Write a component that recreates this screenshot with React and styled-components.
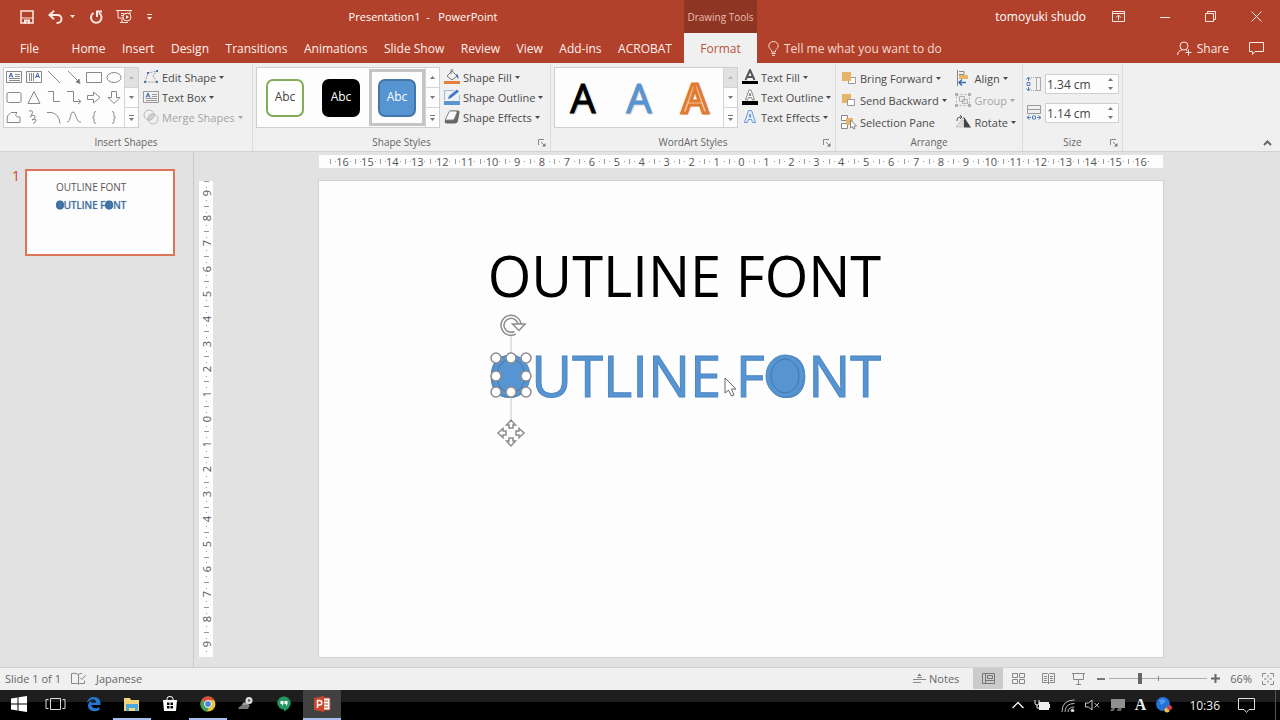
import React from 'react'
import styled, { createGlobalStyle, css } from 'styled-components'

const GlobalStyle = createGlobalStyle`
  * { box-sizing: border-box; }
  body {
    margin: 0;
    font-family: "Open Sans", "Noto Sans", sans-serif;
    font-size: 12px;
    color: #444;
    background: #000;
  }
  button, input {
    font: inherit;
    color: inherit;
    padding: 0;
    border: 0;
    background: none;
  }
  h1, h2, p { margin: 0; font-weight: 400; }
  svg { display: block; flex: none; }
`

const App = () => (
  <Window>
    <GlobalStyle />
    <TitleBar />
    <TabBar />
    <Ribbon />
    <Workspace>
      <Thumbnails />
      <Editor />
    </Workspace>
    <StatusBar />
    <Taskbar />
  </Window>
)

export default App

/* ---------- icons ---------- */

const Icon = ({ w = 16, h = 16, color = 'currentColor', children }) => (
  <svg width={w} height={h} viewBox={`0 0 ${w} ${h}`} fill="none" stroke={color} aria-hidden="true">
    {children}
  </svg>
)

const Caret = ({ up }) => (
  <Icon w={5} h={3}>
    <path d={up ? 'M0 3h5L2.500 0z' : 'M0 0h5L2.500 3z'} fill="currentColor" stroke="none" />
  </Icon>
)

const More = () => (
  <Icon w={5} h={6}>
    <path d="M0 .5h5" />
    <path d="M0 3h5L2.500 6z" fill="currentColor" stroke="none" />
  </Icon>
)

const Launcher = () => (
  <Icon w={8} h={8} color="#888">
    <path d="M.5 6V.5H6M3 3l3 3" />
    <path d="M7.500 4v3.500H4z" fill="#777" stroke="none" />
  </Icon>
)

const SaveIcon = () => (
  <Icon w={14} h={14}>
    <path d="M1 1h12v12H1z" strokeWidth="1.500" />
    <path d="M1 8h12" />
    <path d="M4 13.500V9.500h6v4H8v-2H6v2z" fill="currentColor" stroke="none" />
  </Icon>
)

const UndoIcon = () => (
  <Icon w={15} h={14}>
    <path d="M2 5h7.500a4 4 0 0 1 0 8H8.500" strokeWidth="2" />
    <path d="M6 .8 1.500 5 6 9.200" strokeWidth="2" />
  </Icon>
)

const RepeatIcon = () => (
  <Icon w={14} h={14}>
    <path d="M4.500 3A5.300 5.300 0 1 0 10 3" strokeWidth="2" />
    <path d="M8 7V1.500H13" strokeWidth="2" />
  </Icon>
)

const FromStartIcon = () => (
  <Icon w={17} h={15}>
    <path d="M0 1.500h16M2 2v7h5M5 4.500h3M5 6.500h2M6 10v3M4 13.500h8M14 2v3" />
    <circle cx="11" cy="8" r="4" />
    <path d="M10 6v4l3-2z" fill="currentColor" stroke="none" />
  </Icon>
)

const RibbonOptionsIcon = () => (
  <Icon w={13} h={11}>
    <path d="M.5.500h12v10H.500zM.5 2.500h12M6.500 9V4.500M4 6.500l2.500-2.500L9 6.500" />
  </Icon>
)

const MinimizeIcon = () => <Icon w={10} h={10}><path d="M0 5.500h10" /></Icon>
const RestoreIcon = () => (
  <Icon w={11} h={11}><path d="M.5 2.500h8v8h-8zM2.500 2.500V.500h8v8H8.500" /></Icon>
)
const CloseIcon = () => <Icon w={11} h={11}><path d="M.5.500l10 10M10.500.500l-10 10" /></Icon>

const BulbIcon = () => (
  <Icon w={11} h={15}>
    <path d="M3.500 11V9.500C2.500 8 .8 7 .8 4.800a4.700 4.300 0 0 1 9.400 0C10.200 7 8.500 8 7.500 9.500V11zM3.500 12.500h4M4 14.300h3" />
  </Icon>
)

const ShareIcon = () => (
  <Icon w={15} h={15}>
    <circle cx="7" cy="5" r="4" />
    <path d="M.5 14c.3-3 2-4.500 4.500-5M9 9l1.500 1M11.500 8.500v6M8.500 11.500h6" />
  </Icon>
)

const CommentIcon = () => (
  <Icon w={15} h={13}><path d="M.5.500h14v9H6l-2.500 3v-3h-3z" /></Icon>
)

const EditShapeIcon = () => (
  <Icon color="#999">
    <path d="M2 13 5 4l9-2-4 5 4 6z" strokeDasharray="2 1" />
    <path d="M1 12h2v2H1zM4 3h2v2H4zM13 1h2v2h-2zM13 12h2v2h-2z" fill="#4a72b0" stroke="none" />
  </Icon>
)

const TextBoxIcon = () => (
  <Icon color="#999">
    <path d="M.5 2.500h15v11H.500zM9 5.500h5M9 7.500h5M3 9.500h11M3 11.500h11" />
    <path d="M3 8.500l2-4.500 2 4.500M4 7h2" stroke="#3c66a8" />
  </Icon>
)

const MergeIcon = () => (
  <Icon color="#bbb">
    <circle cx="6" cy="6" r="5" />
    <circle cx="10" cy="10" r="5" />
    <path d="M5 10a5 5 0 0 1 6-5 5 5 0 0 1-6 6z" fill="#d2d2d2" />
  </Icon>
)

const FillIcon = () => (
  <Icon color="#777">
    <path d="M3 7 8 2l5 5-5 4zM7 5V1.500a1 1 0 0 1 2 0" />
    <path d="M12 5c2 0 2.500 2 2.500 5-1.500-1-2-2.500-2-4z" fill="#3d6cb0" stroke="none" />
    <path d="M0 12h16v3H0z" fill="#e0803a" stroke="none" />
  </Icon>
)

const OutlineIcon = () => (
  <Icon color="#9dbbe0">
    <path d="M10 1.500H.5v9.500M15.500 6v5" />
    <path d="M4 10l1-3 8-6.500 2 2-8 6.500z" fill="#3f78bf" stroke="none" />
    <path d="M0 12h16v4H0z" fill="#5b93cf" stroke="none" />
  </Icon>
)

const EffectsIcon = () => (
  <Icon color="#888">
    <path d="M1 11 5 3q.5-1.500 2-1.500h7q1.800 0 1.500 2l-1.500 8q-.5 3-3 3H3q-3 0-2-3.500z" fill="#666" stroke="none" />
    <path d="M1.500 10 5 3Q5.500 2 6.500 2h5.500q1.500 0 1 1.500L10.500 9.500q-.4 1.500-2 1.500H2.500q-1.400 0-1-1z" fill="#fafafa" />
  </Icon>
)

const TextFillIcon = () => (
  <Icon color="#555">
    <path d="M3.500 11 8 1l4.500 10M5 8h6" strokeWidth="2" />
    <path d="M0 12h16v3H0z" fill="#000" stroke="none" />
  </Icon>
)

const TextOutlineIcon = () => (
  <Icon color="#888">
    <path d="M3.500 11h2L6.500 8.500h3l1 2.500h2L9 1H7zM7 6.500 8 4l1 2.500z" fill="#fff" />
    <path d="M0 12h16v4H0z" fill="#000" stroke="none" />
  </Icon>
)

const TextEffectsIcon = () => (
  <Icon color="#6d98d2">
    <path d="M2.500 13.500h3l1-3h3l1 3h3L9.500 1.500h-3zM7.200 8 8 5l.8 3z" fill="#e4eefa" />
  </Icon>
)

const ForwardIcon = () => (
  <Icon color="#999">
    <path d="M7.500 7.500h7v6h-7z" fill="#fff" />
    <path d="M1 2h9v9H1z" fill="#e6b566" stroke="none" />
  </Icon>
)

const BackwardIcon = () => (
  <Icon color="#999">
    <path d="M1 2h9v9H1z" fill="#e6b566" stroke="none" />
    <path d="M6.500 7.500h7v6h-7z" fill="#fff" />
  </Icon>
)

const SelectionIcon = () => (
  <Icon color="#888">
    <path d="M.5 1.500h6v5h-6zM.5 9.500h6v5h-6z" fill="#fff" />
    <path d="M5 4h7v7H5z" fill="#e6b566" stroke="none" />
    <path d="M9.500 6v8l2-1.500 1 2.500 1.500-.6-1-2.400h2.500z" fill="#fff" />
  </Icon>
)

const AlignIcon = () => (
  <Icon color="#888">
    <path d="M2.500 0v16M4 1.500h5v3H4" />
    <path d="M4 5h9v4H4z" fill="#e6b566" stroke="none" />
    <path d="M4 12.500h7M7 9.500l-3 3 3 3" stroke="#3d6cb0" strokeWidth="1.500" />
  </Icon>
)

const GroupIcon = () => (
  <Icon color="#b0b0b0">
    <path d="M1.500 2.500h13v11h-13z" strokeDasharray="2 2" />
    <path d="M4.500 4.500h5v5h-5zM7.500 7.500h5v4h-5z" />
    <path d="M0 1h3v3H0zM13 1h3v3h-3zM0 12h3v3H0zM13 12h3v3h-3z" fill="#b0b0b0" stroke="none" />
  </Icon>
)

const RotateIcon = () => (
  <Icon color="#666">
    <path d="M8.500 3v10H1z" fill="#ddd" stroke="#bbb" strokeDasharray="2 1" />
    <path d="M9 3v10.500h7z" fill="#444" stroke="none" />
    <path d="M2 7c0-3 1-4 4-4M5 1l2 2-2 2" stroke="#555" />
  </Icon>
)

const HeightIcon = () => (
  <Icon color="#aaa">
    <path d="M10.500 1.500h4v13h-4z" />
    <path d="M5 1.500h5M5 14.500h5" strokeDasharray="1 1" />
    <path d="M2.500 1v4M2.500 11v4M1 6.500h3v3H1zM.5 3.500l2-2.500 2 2.500M.5 12.500l2 2.500 2-2.500" stroke="#5a80b8" />
  </Icon>
)

const WidthIcon = () => (
  <Icon color="#999">
    <path d="M1.500.500h13v8h-13zM1.500 4.500h13" />
    <path d="M1 12.500h4M11 12.500h4M6.500 11h3v3h-3zM3.500 10.500l-2.500 2 2.500 2M12.500 10.500l2.500 2-2.500 2" stroke="#5a80b8" />
  </Icon>
)

const SHAPES = [
  ['text box', <><path d="M.5 1.500h15v11H.500zM9 4.500h5M9 6.500h5M3 8.500h11M3 10.500h11" /><path d="M3 7.500 5 3l2 4.500M4 6h2" stroke="#3c66a8" /></>],
  ['vertical text box', <><path d="M.5 1.500h15v11H.500zM3.500 3v8M5.500 3v8M7.500 3v8" /><path d="M9.500 8l2-5 2 5M10 6.500h3" stroke="#3c66a8" /></>],
  ['line', <path d="M2 1l12 12" />],
  ['arrow', <><path d="M2 1l11 11" /><path d="M14 13.500 10 12l3-3z" fill="#777" /></>],
  ['rectangle', <path d="M.5 2.500h15v10H.500z" />],
  ['oval', <ellipse cx="8" cy="7.500" rx="7" ry="5" />],
  ['rounded rectangle', <rect x="1" y="2.500" width="14" height="10" rx="1.500" />],
  ['triangle', <path d="M8 1.500 14 13.500H2z" />],
  ['elbow', <path d="M2 1.500h5.500v10H14" />],
  ['elbow arrow', <><path d="M1 1.500h6.500v10H14" /><path d="M12 9l3 2.500-3 2.500" /></>],
  ['right arrow', <path d="M1.500 5.500h6v-3.500l6.500 5.500L7.500 13V9.500h-6z" />],
  ['down arrow', <path d="M5.500 1.500h5v6H14L8 13.500 2 7.500h3.500z" />],
  ['freeform', <path d="M1.500 6 5 2.500h6q-3 3.500 1 4.500h2v5.500h-13z" />],
  ['scribble', <path d="M3 1q5-1 3 3t-2 3q4-3 5-1t-3 4q4-2 4 0t-3 3.500" />],
  ['curve', <path d="M1 2.500h4q8 1 9 11" />],
  ['wave', <path d="M1 12c4 0 3-10 6-10s3 11 8 10" />],
  ['left brace', <path d="M10 1.500Q8 1.500 8 3.500V6Q8 7.500 6.500 7.500 8 7.500 8 9v2.500q0 2 2 2" />],
  ['right brace', <path d="M6 1.500q2 0 2 2V6q0 1.500 1.500 1.500Q8 7.500 8 9v2.500q0 2-2 2" />],
]

/* ---------- title and tabs ---------- */

const TitleBar = () => (
  <TitleRow>
    <TitleLeft>
      <QuickAccess>
        <BarButton aria-label="Save"><SaveIcon /></BarButton>
        <SplitButton>
          <BarButton aria-label="Undo"><UndoIcon /></BarButton>
          <BarButton aria-label="Undo history"><Caret /></BarButton>
        </SplitButton>
        <BarButton aria-label="Repeat"><RepeatIcon /></BarButton>
        <BarButton aria-label="Start from beginning"><FromStartIcon /></BarButton>
        <BarButton aria-label="Customize"><More /></BarButton>
      </QuickAccess>
      <DocTitle>Presentation1&nbsp; -&nbsp;&nbsp; PowerPoint</DocTitle>
    </TitleLeft>
    <ToolsLabel>Drawing Tools</ToolsLabel>
    <WindowControls>
      <span>tomoyuki shudo</span>
      <ControlButtons>
        <BarButton aria-label="Ribbon display options"><RibbonOptionsIcon /></BarButton>
        <BarButton aria-label="Minimize"><MinimizeIcon /></BarButton>
        <BarButton aria-label="Restore"><RestoreIcon /></BarButton>
        <BarButton aria-label="Close"><CloseIcon /></BarButton>
      </ControlButtons>
    </WindowControls>
  </TitleRow>
)

const TABS = ['Home', 'Insert', 'Design', 'Transitions', 'Animations', 'Slide Show', 'Review', 'View', 'Add-ins', 'ACROBAT']

const TabBar = () => (
  <TabRow>
    <Tabs>
      <FileTab>File</FileTab>
      {TABS.map(t => <Tab key={t}>{t}</Tab>)}
    </Tabs>
    <ActiveTab>Format</ActiveTab>
    <TabsRight>
      <TellMe><BulbIcon />Tell me what you want to do</TellMe>
      <Share><ShareIcon />Share</Share>
      <BarButton aria-label="Comments"><CommentIcon /></BarButton>
    </TabsRight>
  </TabRow>
)

/* ---------- ribbon ---------- */

const GalleryScroll = ({ top }) => (
  <Scroller>
    <ScrollButton aria-label="Previous row" $off={top}><Caret up /></ScrollButton>
    <ScrollButton aria-label="Next row"><Caret /></ScrollButton>
    <ScrollButton aria-label="More"><More /></ScrollButton>
  </Scroller>
)

const Cmd = ({ icon, label, menu = true, off }) => (
  <Command $off={off}>
    {icon}
    <span>{label}</span>
    {menu && <Caret />}
  </Command>
)

const Ribbon = () => (
  <RibbonBar>
    <Group $width={253}>
      <GroupBody>
        <Gallery>
          <ShapeGrid>
            {SHAPES.map(([name, art]) => (
              <ShapeButton key={name} aria-label={name}>
                <Icon h={15} color="#888">{art}</Icon>
              </ShapeButton>
            ))}
          </ShapeGrid>
          <GalleryScroll top />
        </Gallery>
        <Commands>
          <Cmd icon={<EditShapeIcon />} label="Edit Shape" />
          <Cmd icon={<TextBoxIcon />} label="Text Box" />
          <Cmd icon={<MergeIcon />} label="Merge Shapes" off />
        </Commands>
      </GroupBody>
      <GroupLabel>Insert Shapes</GroupLabel>
    </Group>

    <Group $width={298}>
      <GroupBody>
        <Gallery>
          <StyleCell><StyleTile $bg="#fff" $line="#82ad58" $color="#444">Abc</StyleTile></StyleCell>
          <StyleCell><StyleTile $bg="#000" $line="#000" $color="#fff">Abc</StyleTile></StyleCell>
          <StyleCell $on><StyleTile $bg="#5794d2" $line="#4276ab" $color="#fff">Abc</StyleTile></StyleCell>
          <GalleryScroll />
        </Gallery>
        <Commands>
          <Cmd icon={<FillIcon />} label="Shape Fill" />
          <Cmd icon={<OutlineIcon />} label="Shape Outline" />
          <Cmd icon={<EffectsIcon />} label="Shape Effects" />
        </Commands>
      </GroupBody>
      <GroupLabel>Shape Styles</GroupLabel>
      <LaunchButton aria-label="Format Shape"><Launcher /></LaunchButton>
    </Group>

    <Group $width={285}>
      <GroupBody>
        <Gallery>
          <ArtCell $color="#000">A</ArtCell>
          <ArtCell $color="#5794d2">A</ArtCell>
          <ArtCell $color="#f9c9a6" $stroke="#e07a30">A</ArtCell>
          <GalleryScroll top />
        </Gallery>
        <Commands>
          <Cmd icon={<TextFillIcon />} label="Text Fill" />
          <Cmd icon={<TextOutlineIcon />} label="Text Outline" />
          <Cmd icon={<TextEffectsIcon />} label="Text Effects" />
        </Commands>
      </GroupBody>
      <GroupLabel>WordArt Styles</GroupLabel>
      <LaunchButton aria-label="Format Text Effects"><Launcher /></LaunchButton>
    </Group>

    <Group $width={187}>
      <ArrangeBody>
        <Commands $tall>
          <Cmd icon={<ForwardIcon />} label="Bring Forward" />
          <Cmd icon={<BackwardIcon />} label="Send Backward" />
          <Cmd icon={<SelectionIcon />} label="Selection Pane" menu={false} />
        </Commands>
        <Commands $tall>
          <Cmd icon={<AlignIcon />} label="Align" />
          <Cmd icon={<GroupIcon />} label="Group" off />
          <Cmd icon={<RotateIcon />} label="Rotate" />
        </Commands>
      </ArrangeBody>
      <GroupLabel>Arrange</GroupLabel>
    </Group>

    <Group $width={100}>
      <SizeFields>
        <SizeField>
          <HeightIcon />
          <Spin><input aria-label="Shape height" defaultValue="1.34 cm" /><SpinArrows><Caret up /><Caret /></SpinArrows></Spin>
        </SizeField>
        <SizeField>
          <WidthIcon />
          <Spin><input aria-label="Shape width" defaultValue="1.14 cm" /><SpinArrows><Caret up /><Caret /></SpinArrows></Spin>
        </SizeField>
      </SizeFields>
      <GroupLabel>Size</GroupLabel>
      <LaunchButton aria-label="Size and position"><Launcher /></LaunchButton>
    </Group>

    <Collapse aria-label="Collapse the ribbon">
      <Icon w={9} h={6} color="#666"><path d="M1 5l3.500-3.500L8 5" strokeWidth="2" /></Icon>
    </Collapse>
  </RibbonBar>
)

/* ---------- slide area ---------- */

const Thumbnails = () => (
  <ThumbPane>
    <ThumbNumber>1</ThumbNumber>
    <Thumb aria-label="Slide 1">
      <ThumbLine>OUTLINE FONT</ThumbLine>
      <ThumbLine $blue><Dot>O</Dot>UTLINE F<Dot>O</Dot>NT</ThumbLine>
    </Thumb>
  </ThumbPane>
)

const range = n => Array.from({ length: n * 2 + 1 }, (_, i) => Math.abs(i - n))

const Editor = () => (
  <EditorGrid>
    <HRuler>{range(16).map((n, i) => <HCell key={i}>{n}</HCell>)}</HRuler>
    <VRuler>{range(9).map((n, i) => <VCell key={i}><span>{n}</span></VCell>)}</VRuler>
    <Slide>
      <SlideText>OUTLINE FONT</SlideText>
      <SlideText $blue>OUTLINE FONT</SlideText>
      <SelectionLayer />
    </Slide>
  </EditorGrid>
)

const HANDLES = [[177, 177], [192, 177], [207, 177], [177, 195], [207, 195], [177, 211], [192, 211], [207, 211]]
const ARROW = 'M-2-5v-3h-2.500L0-13l4.500 5H2v3z'

const SelectionLayer = () => (
  <Overlay viewBox="0 0 844 476" fill="none" aria-hidden="true">
    {[192, 466].map(x => (
      <g key={x} fill="#5794d2" stroke="#4276ab">
        <ellipse cx={x} cy="195" rx="19" ry="21" stroke="#4f87c0" />
        <ellipse cx={x} cy="195" rx="14" ry="17" />
      </g>
    ))}
    <path d="M192 154v85" stroke="#c8c8c8" />
    <ellipse cx="192" cy="195" rx="18" ry="20" fill="#5794d2" />
    <ellipse cx="192" cy="195" rx="14" ry="17" stroke="#4276ab" />
    <g stroke="#8c8c8c" strokeWidth="1.500">
      {HANDLES.map(([x, y]) => <circle key={x + '-' + y} cx={x} cy={y} r="5" fill="#fff" />)}
      <g transform="translate(192 144)">
        <path d="M8.500 0A8.500 8.500 0 1 0 4 7.800" strokeWidth="4.500" />
        <path d="M8.500 0A8.500 8.500 0 1 0 4 7.800" stroke="#fff" strokeWidth="1.500" />
        <path d="M1.500-1h12.500L8 5.500z" fill="#fff" />
      </g>
      <g transform="translate(192 252)">
        {[0, 90, 180, 270].map(a => <path key={a} d={ARROW} transform={`rotate(${a})`} fill="#fff" />)}
      </g>
    </g>
    <path d="M406 197v15l3.500-3 3 6 2.500-1-2.500-6h4.500z" fill="#fff" stroke="#666" />
  </Overlay>
)

/* ---------- status bar ---------- */

const StatusBar = () => (
  <Status>
    <span>Slide 1 of 1</span>
    <StatusButton aria-label="Spelling">
      <Icon w={15} h={13} color="#888"><path d="M7.500 2.500v10M7.500 2.500Q4 .5.500 1.500v10h6l1 1 1-1h5v-3M7.500 2.500 9 1.500h2M9 5.500l2 2 3.500-4.500" /></Icon>
    </StatusButton>
    <StatusButton>Japanese</StatusButton>
    <Spacer />
    <NotesButton>
      <Icon w={13} h={12} color="#888"><path d="M0 6.500h13M0 9.500h8M4 4.500h5" /><path d="M4.500 3 6.500.500l2 2.500z" fill="#777" stroke="none" /></Icon>
      Notes
    </NotesButton>
    <Views>
      <ViewButton aria-label="Normal" $on>
        <Icon w={13} h={11} color="#777"><path d="M.5.500h12v10H.500zM3.500.500v10M3.500 7.500h9M5.500 2.500h5v3h-5z" /></Icon>
      </ViewButton>
      <ViewButton aria-label="Slide sorter">
        <Icon w={13} h={11} color="#888"><path d="M.5.500h5v4h-5zM7.500.500h5v4h-5zM.5 6.500h5v4h-5zM7.500 6.500h5v4h-5z" /></Icon>
      </ViewButton>
      <ViewButton aria-label="Reading view">
        <Icon w={13} h={11} color="#888"><path d="M6.500 1v10M.5.500h5l1 1 1-1h5v9h-5l-1 1-1-1h-5zM2 3.500h3M2 5.500h3M2 7.500h3M8 3.500h3M8 5.500h3M8 7.500h3" /></Icon>
      </ViewButton>
      <ViewButton aria-label="Slide show">
        <Icon w={13} h={12} color="#888"><path d="M0 .5h13M1.500 1v5.500h10V1M6.500 7v4M4 11.500h5" /></Icon>
      </ViewButton>
      <Zoom>
        <StatusButton aria-label="Zoom out"><Icon w={8} h={10} color="#777"><path d="M0 5h8" strokeWidth="2" /></Icon></StatusButton>
        <ZoomRange type="range" aria-label="Zoom" min="0" max="100" defaultValue="30" />
        <StatusButton aria-label="Zoom in"><Icon w={9} h={9} color="#666"><path d="M0 4.500h9M4.500 0v9" strokeWidth="2" /></Icon></StatusButton>
      </Zoom>
    </Views>
    <StatusButton>66%</StatusButton>
    <StatusButton aria-label="Fit slide to window">
      <Icon w={12} h={12} color="#888"><path d="M.5 4V.500H4M8 .5h3.500V4M11.500 8v3.500H8M4 11.500H.500V8M6 2v2.500M6 7.500V10M2 6h2.500M7.500 6H10" /></Icon>
    </StatusButton>
  </Status>
)

/* ---------- windows taskbar ---------- */

const APPS = [
  ['Start', <path d="M0 2.500 6.500 1.500V7.500H0zM7.500 1.300 16 0v7.500H7.500zM0 8.500h6.500v6L0 13.500zM7.500 8.500H16V16l-8.500-1.300z" fill="#fff" />],
  ['Task view', <path d="M2.500 2.500h10v11h-10zM.5 3.500h-2.500v9H.5M14.500 3.500H17v9h-2.500" stroke="#ddd" />],
  ['Edge', <path d="M1 7C2 2 5 1 8 1c4.500 0 7 3 6.500 8H5.500c.5 4 5.500 4 8 2v3C8 16.500 2 15 2 9.500 2 7 4 5 6 4.500 5.300 5 5 6 5 6.500h5C10 4 8.500 3.500 7 3.500 4 3.500 2 5.500 1 7z" fill="#2477cf" />],
  ['File Explorer', <><path d="M0 2h6l1 2h8v11H0z" fill="#f3d57b" /><path d="M2 8h12v7h-3v-3H5v3H2z" fill="#4fa8dc" /></>, 'on'],
  ['Store', <><path d="M1 4h14l-1 11H2z" fill="#fff" /><path d="M5 5V2.500q0-2 3-2t3 2V5" stroke="#fff" /><path d="M5 6.500h2.500V9H5zM8.500 6.500H11V9H8.500zM5 10h2.500v2.500H5zM8.500 10H11v2.500H8.500z" fill="#000" /></>],
  ['Chrome', <><circle cx="8" cy="8" r="7.500" fill="#e8c53a" /><path d="M8 8 1.500 4.200A7.500 7.500 0 0 1 14.500 4.200H8z" fill="#d94f3d" /><path d="M8 8 1.500 4.200A7.500 7.500 0 0 0 7 15.500L10 9z" fill="#3f9e57" /><circle cx="8" cy="8" r="3.500" fill="#4a83dd" stroke="#fff" /></>, 'on'],
  ['Scanner', <><path d="M0 12 4 9h8l-2 4H1z" fill="#777" /><path d="M4 9q0-3 5-3l2 3z" fill="#999" /><circle cx="11" cy="4.500" r="3.500" fill="#ddd" /><circle cx="11" cy="4.500" r="1.200" fill="#555" /></>],
  ['Hangouts', <><path d="M8 .5a6.700 6.500 0 0 1 6.700 6.500c0 4-3.700 7-6.700 8.500v-2.500A6.500 6.300 0 0 1 8 .5z" fill="#239a62" /><path d="M8 .5a6.700 6.500 0 0 0 0 13z" fill="#239a62" /><path d="M4.500 5h3v3l-1.500 2V8H4.500zM8.500 5h3v3L10 10V8H8.500z" fill="#fff" /></>],
  ['PowerPoint', <><path d="M8 2h8v12H8z" fill="#fff" stroke="#c9452c" /><path d="M10 5h4M10 8h4M10 11h4" stroke="#c9452c" /><path d="M0 2 10 0v16L0 14z" fill="#c9452c" /><path d="M3.500 12V4.500h2a2 2 0 0 1 0 4.500h-2" stroke="#fff" strokeWidth="1.500" /></>, 'active'],
]

const Taskbar = () => (
  <TaskRow>
    {APPS.map(([name, art, state]) => (
      <TaskButton key={name} aria-label={name} $state={state}>
        <Icon color="none">{art}</Icon>
      </TaskButton>
    ))}
    <Tray>
      <Icon w={12} h={8}><path d="M.5 7 6 1.500 11.500 7" strokeWidth="1.500" /></Icon>
      <Icon w={17} h={12}><path d="M1 1v3q0 2 2 2t2-2V1M3 6v3h3" /><path d="M5 3h10v2h1v4h-1v2H5z" fill="#eee" stroke="none" /></Icon>
      <Icon w={14} h={13} color="#bbb"><path d="M1 13Q1 1 13.500 1M4 13Q4 4.500 13.500 4.500M7 13Q7 8 13.500 8" /><circle cx="11.500" cy="11.500" r="1.500" fill="#ddd" /></Icon>
      <Icon w={15} h={12} color="#ccc"><path d="M.5 4h3L7 1v10L3.500 8h-3zM9.500 4l4.500 4.500M14 4 9.500 8.500" /></Icon>
      <Icon w={15} h={14} color="none"><path d="M1 1h14v9H1z" fill="#8f8f8f" /><path d="M2 10h3l-1 3H0zM8 10h4l-1 3H7z" fill="#666" /></Icon>
      <ImeMode>A</ImeMode>
      <Icon color="none"><circle cx="7" cy="7" r="7" fill="#2472d8" /><path d="M3 3q4-2 6 0t-4 5z" fill="#4a98ee" /><circle cx="11" cy="13" r="2.500" fill="#f0c04a" /><circle cx="13.500" cy="10.500" r="2.500" fill="#d2414a" /></Icon>
      <Clock>10:36</Clock>
      <Icon w={17} h={17} color="#ddd"><path d="M.5 1.500h16v11H11L8.500 15.500 6 12.500H.500z" /></Icon>
    </Tray>
  </TaskRow>
)

/* ---------- styles ---------- */

const Window = styled.div`
  display: flex;
  flex-direction: column;
  min-height: 100vh;
`

const headerRow = css`
  display: grid;
  grid-template-columns: 684px 73px 1fr;
  background: #b1412a;
  color: #fff;
`

const TitleRow = styled.header`
  ${headerRow}
  height: 33px;
`

const TitleLeft = styled.div`
  display: flex;
  align-items: center;
`

const QuickAccess = styled.div`
  display: flex;
  align-items: center;
  justify-content: space-between;
  width: 152px;
  padding-left: 20px;
`

const SplitButton = styled.div`
  display: flex;
  gap: 7px;
`

const BarButton = styled.button`
  display: flex;
  align-items: center;
  color: #fbe9e4;
`

const DocTitle = styled.h1`
  flex: 1;
  padding-left: 10px;
  text-align: center;
  font-size: 11px;
`

const ToolsLabel = styled.div`
  display: flex;
  align-items: center;
  justify-content: center;
  background: #8f3524;
  color: #eebcb0;
  font-size: 10px;
`

const WindowControls = styled.div`
  display: flex;
  align-items: center;
  justify-content: flex-end;
  gap: 26px;
  padding-right: 18px;
`

const ControlButtons = styled.div`
  display: flex;
  align-items: center;
  justify-content: space-between;
  width: 150px;
`

const TabRow = styled.nav`
  ${headerRow}
  height: 30px;
`

const Tabs = styled.div`
  display: flex;
  justify-content: space-between;
  padding: 0 12px 0 20px;
`

const Tab = styled.button`
  color: #fdf1ee;
  white-space: nowrap;
`

const FileTab = styled(Tab)`
  margin-right: 16px;
`

const ActiveTab = styled(Tab)`
  background: #f0f0f0;
  color: #b9523d;
`

const TabsRight = styled.div`
  display: flex;
  align-items: center;
  gap: 20px;
  padding: 0 16px 0 11px;
`

const TellMe = styled.button`
  display: flex;
  align-items: center;
  gap: 5px;
  margin-right: auto;
  color: #f7d9d1;
`

const Share = styled(BarButton)`
  gap: 5px;
`

const RibbonBar = styled.section`
  display: flex;
  height: 89px;
  background: #f0f0f0;
  border-bottom: 1px solid #d2d2d2;
`

const Group = styled.div`
  position: relative;
  display: flex;
  flex-direction: column;
  justify-content: space-between;
  flex: none;
  width: ${p => p.$width}px;
  padding: 4px 3px 0;
  border-right: 1px solid #dcdcdc;
`

const GroupBody = styled.div`
  display: flex;
  gap: 4px;
`

const ArrangeBody = styled(GroupBody)`
  justify-content: space-between;
  padding: 0 3px 0 2px;
`

const GroupLabel = styled.div`
  height: 17px;
  line-height: 17px;
  font-size: 10px;
  text-align: center;
  color: #666;
`

const LaunchButton = styled.button`
  position: absolute;
  right: 4px;
  bottom: 4px;
`

const Gallery = styled.div`
  display: flex;
  height: 61px;
  background: #fdfdfd;
  border: 1px solid #cfcfcf;
`

const ShapeGrid = styled.div`
  display: grid;
  grid-template-columns: repeat(6, 20px);
`

const ShapeButton = styled.button`
  display: flex;
  align-items: center;
  justify-content: center;
`

const Scroller = styled.div`
  display: flex;
  flex-direction: column;
  width: 14px;
  border-left: 1px solid #d4d4d4;
`

const ScrollButton = styled.button`
  flex: 1;
  display: flex;
  align-items: center;
  justify-content: center;
  color: #777;
  & + & { border-top: 1px solid #d4d4d4; }
  ${p => p.$off && 'background: #e1e1e1; color: #b5b5b5;'}
`

const Commands = styled.div`
  display: flex;
  flex-direction: column;
  flex: none;
  button { height: ${p => (p.$tall ? 22 : 20)}px; }
`

const Command = styled.button`
  display: flex;
  align-items: center;
  gap: 3px;
  white-space: nowrap;
  font-size: 11px;
  color: ${p => (p.$off ? '#a5a5a5' : '#4a4a4a')};
`

const StyleCell = styled.button`
  display: flex;
  align-items: center;
  justify-content: center;
  width: 56px;
  border: 3px solid ${p => (p.$on ? '#c4c4c4' : 'transparent')};
  margin: 1px 0;
`

const StyleTile = styled.span`
  width: 38px;
  height: 38px;
  line-height: 32px;
  text-align: center;
  border: 2px solid ${p => p.$line};
  border-radius: 7px;
  background: ${p => p.$bg};
  color: ${p => p.$color};
`

const ArtCell = styled.button`
  width: 56px;
  font-size: 40px;
  line-height: 56px;
  color: ${p => p.$color};
  text-shadow: 1px 1px 2px #aaa;
  -webkit-text-stroke: 1px ${p => p.$color};
  ${p => p.$stroke && `
    font-weight: 600;
    -webkit-text-stroke: 3px ${p.$stroke};
  `}
`

const SizeFields = styled.div`
  display: flex;
  flex-direction: column;
  gap: 9px;
  padding-top: 7px;
`

const SizeField = styled.div`
  display: flex;
  align-items: center;
  gap: 3px;
`

const Spin = styled.div`
  display: flex;
  align-items: center;
  flex: 1;
  min-width: 0;
  height: 20px;
  padding: 0 5px 0 1px;
  background: #fdfdfd;
  border: 1px solid #cfcfcf;
  input { flex: 1; min-width: 0; }
`

const SpinArrows = styled.span`
  display: grid;
  gap: 6px;
  color: #777;
`

const Collapse = styled.button`
  align-self: flex-end;
  margin: 0 8px 5px auto;
`

const Workspace = styled.main`
  flex: 1;
  display: flex;
  background: #e2e2e2;
`

const ThumbPane = styled.aside`
  display: flex;
  align-items: flex-start;
  gap: 5px;
  width: 194px;
  padding: 17px 18px 0 12px;
  border-right: 1px solid #c9c9c9;
`

const ThumbNumber = styled.span`
  line-height: 14px;
  font-size: 14px;
  color: #d04a2e;
`

const Thumb = styled.button`
  flex: 1;
  display: flex;
  flex-direction: column;
  align-items: flex-start;
  aspect-ratio: 149 / 86;
  padding: 7px 0 0 29px;
  background: #fdfdfd;
  border: 2px solid #dd7359;
`

const ThumbLine = styled.span`
  height: 18px;
  line-height: 18px;
  font-size: 10px;
  white-space: nowrap;
  color: ${p => (p.$blue ? '#3f6b9c' : '#555')};
  ${p => p.$blue && 'text-shadow: 0 0 1px #3f6b9c;'}
`

const Dot = styled.span`
  border-radius: 50%;
  background: radial-gradient(circle, #4377ad 4px, transparent 5px);
`

const EditorGrid = styled.div`
  flex: 1;
  display: grid;
  grid-template-columns: 14px 1fr;
  grid-template-rows: 13px auto;
  column-gap: 106px;
  row-gap: 13px;
  align-content: start;
  padding: 3px 117px 10px 5px;
`

const HRuler = styled.div`
  grid-column: 2;
  display: flex;
  padding: 0 10px 0 11px;
  background: #fdfdfd;
  font-size: 11px;
  line-height: 13px;
  color: #555;
`

const tick = 'linear-gradient(#999, #999)'

const HCell = styled.span`
  flex: 1 1 0;
  text-align: center;
  background: ${tick} 0 50% / 1px 5px no-repeat, ${tick} 20% 50% / 1px 1px no-repeat, ${tick} 82% 50% / 1px 1px no-repeat;
`

const VRuler = styled.div`
  display: flex;
  flex-direction: column;
  background: #fdfdfd;
  font-size: 11px;
  color: #555;
`

const VCell = styled.span`
  flex: 1 1 0;
  display: flex;
  align-items: center;
  justify-content: center;
  background: ${tick} 50% 0 / 5px 1px no-repeat, ${tick} 50% 24% / 1px 1px no-repeat, ${tick} 50% 80% / 1px 1px no-repeat;
  span {
    line-height: 13px;
    writing-mode: vertical-rl;
    transform: rotate(180deg);
  }
`

const Slide = styled.div`
  position: relative;
  aspect-ratio: 844 / 476;
  padding: 64px 0 0 20%;
  background: #fdfdfd;
  outline: 1px solid #d0d0d0;
`

const SlideText = styled.h2`
  font-size: 56px;
  line-height: 60px;
  white-space: nowrap;
  color: #000;
  ${p => p.$blue && `
    margin-top: 40px;
    color: #5794d2;
    -webkit-text-stroke: 1px #4f87c0;
  `}
`

const Overlay = styled.svg`
  position: absolute;
  inset: 0;
  width: 100%;
  height: 100%;
`

const Status = styled.footer`
  display: flex;
  align-items: center;
  gap: 10px;
  height: 23px;
  padding: 0 6px 1px 5px;
  background: #f0f0f0;
  border-top: 1px solid #cfcfcf;
  font-size: 11px;
  color: #666;
`

const StatusButton = styled.button`
  display: flex;
  align-items: center;
  gap: 3px;
`

const NotesButton = styled(StatusButton)`
  margin-right: 4px;
`

const Spacer = styled.div`
  flex: 1;
`

const Views = styled.div`
  display: flex;
  height: 100%;
`

const ViewButton = styled.button`
  display: flex;
  align-items: center;
  justify-content: center;
  width: 30px;
  background: ${p => (p.$on ? '#cbcbcb' : 'none')};
`

const Zoom = styled.div`
  display: flex;
  align-items: center;
  gap: 4px;
  padding-left: 4px;
`

const ZoomRange = styled.input`
  appearance: none;
  width: 98px;
  height: 11px;
  margin: 0;
  background: linear-gradient(#888, #888) 50% 50% / 1px 5px no-repeat, linear-gradient(#aaa, #aaa) 0 50% / 100% 1px no-repeat;
  &::-webkit-slider-thumb {
    appearance: none;
    width: 4px;
    height: 11px;
    background: #666;
  }
`

const TaskRow = styled.div`
  display: flex;
  height: 30px;
  background: linear-gradient(#1e1e1e 12px, #000 12px);
  color: #eee;
`

const TaskButton = styled.button`
  display: flex;
  align-items: center;
  justify-content: center;
  width: 38px;
  border-bottom: 2px solid transparent;
  svg { overflow: visible; }
  &:first-child { margin-right: -1px; }
  ${p => p.$state && 'border-color: #a9bff0;'}
  ${p => p.$state === 'active' && 'background: #414141;'}
`

const Tray = styled.div`
  display: flex;
  align-items: center;
  gap: 10px;
  margin-left: auto;
  margin-right: 4px;
  padding-right: 20px;
  border-right: 1px solid #555;
`

const ImeMode = styled.span`
  font-family: "Liberation Serif", serif;
  font-size: 16px;
  font-weight: 700;
`

const Clock = styled.time`
  margin: 0 8px 0 7px;
`
